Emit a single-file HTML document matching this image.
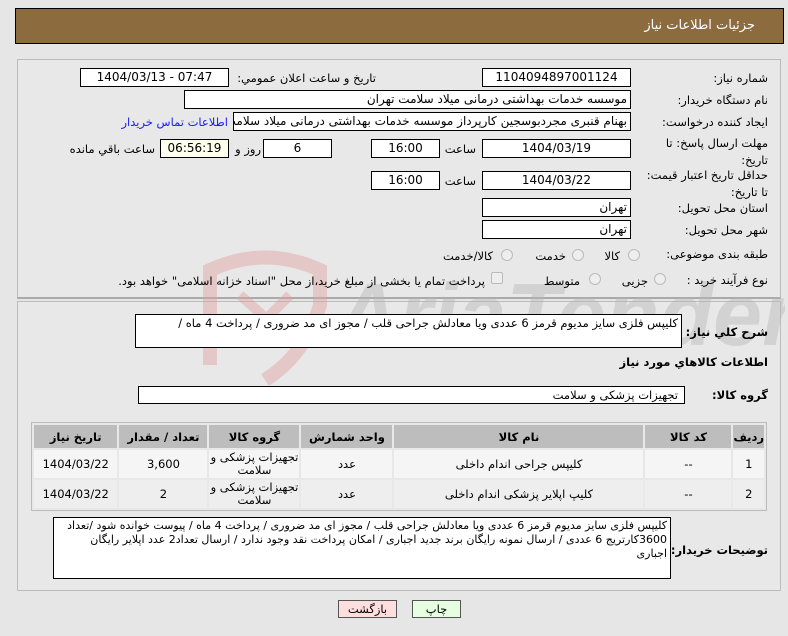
<!DOCTYPE html>
<html><head><meta charset="utf-8"><style>
*{margin:0;padding:0;box-sizing:border-box}
body{width:788px;height:636px;background:#e6e6e6;font-family:"DejaVu Sans","Liberation Sans",sans-serif;font-size:11.5px;color:#000;position:relative;overflow:hidden}
.a{position:absolute}
.box{position:absolute;background:#fff;border:1px solid #000;height:19px;line-height:17px;text-align:center;font-size:12px;white-space:nowrap;overflow:hidden}
.l{position:absolute;white-space:nowrap;direction:rtl;text-align:right;font-size:11.5px}
.rad{position:absolute;width:12px;height:12px;border-radius:50%;border:1px solid #bbb;background:#eee}
table{border-collapse:separate;border-spacing:2px}
td{text-align:center;font-size:11.5px}
</style></head><body>
<div class="a" style="left:15px;top:8px;width:769px;height:36px;background:#8c6b3f;border:1px solid #000"></div>
<div class="l" style="right:33px;top:18px;color:#fff;font-size:13px">جزئیات اطلاعات نیاز</div>

<div class="a" style="left:17px;top:59px;width:764px;height:240px;border:1px solid #bbb;border-bottom:2px solid #aaa;background:#e8e8e8"></div>
<div class="a" style="left:17px;top:301px;width:764px;height:290px;border:1px solid #bbb;background:#e8e8e8"></div>

<!-- watermark -->
<svg class="a" style="left:195px;top:245px;opacity:0.45" width="590" height="140">
<path d="M15 120 V25 Q70 0 125 25 V60 Q110 110 70 135" fill="none" stroke="#e0a0a0" stroke-width="14"/>
<path d="M45 50 L95 95 M95 50 L60 85" stroke="#e0a0a0" stroke-width="10"/>
<text x="140" y="100" font-family="Liberation Sans" font-style="italic" font-weight="bold" font-size="88" fill="#b8b8b8">AriaTender.net</text>
</svg>

<div class="l" style="right:20px;top:71px">شماره نیاز:</div>
<div class="box" style="left:482px;top:68px;width:149px">1104094897001124</div>
<div class="l" style="right:412px;top:71px">تاریخ و ساعت اعلان عمومي:</div>
<div class="box" style="left:80px;top:68px;width:149px">1404/03/13 - 07:47</div>

<div class="l" style="right:20px;top:93px">نام دستگاه خریدار:</div>
<div class="box" style="left:184px;top:90px;width:447px;text-align:right;padding-right:3px;direction:rtl">موسسه خدمات بهداشتی درمانی میلاد سلامت تهران</div>

<div class="l" style="right:20px;top:115px">ایجاد کننده درخواست:</div>
<div class="box" style="left:233px;top:112px;width:398px;text-align:right;direction:rtl;padding-right:3px">بهنام قنبری مجردبوسجین کارپرداز موسسه خدمات بهداشتی درمانی میلاد سلامت تهران</div>
<div class="l" style="right:560px;top:115px;color:#1a1aff">اطلاعات تماس خریدار</div>

<div class="l" style="right:20px;top:135px;line-height:17px">مهلت ارسال پاسخ: تا<br>تاریخ:</div>
<div class="box" style="left:482px;top:139px;width:149px">1404/03/19</div>
<div class="l" style="right:312px;top:142px">ساعت</div>
<div class="box" style="left:371px;top:139px;width:69px">16:00</div>
<div class="l" style="right:527px;top:142px">روز و</div>
<div class="box" style="left:263px;top:139px;width:69px">6</div>
<div class="box" style="left:160px;top:139px;width:69px;background:#ffffee">06:56:19</div>
<div class="l" style="right:633px;top:142px">ساعت باقي مانده</div>

<div class="l" style="right:20px;top:167px;line-height:17px">حداقل تاریخ اعتبار قیمت:<br>تا تاریخ:</div>
<div class="box" style="left:482px;top:171px;width:149px">1404/03/22</div>
<div class="l" style="right:312px;top:174px">ساعت</div>
<div class="box" style="left:371px;top:171px;width:69px">16:00</div>

<div class="l" style="right:20px;top:201px">استان محل تحویل:</div>
<div class="box" style="left:482px;top:198px;width:149px;text-align:right;padding-right:3px">تهران</div>
<div class="l" style="right:20px;top:223px">شهر محل تحویل:</div>
<div class="box" style="left:482px;top:220px;width:149px;text-align:right;padding-right:3px">تهران</div>

<div class="l" style="right:20px;top:247px">طبقه بندی موضوعی:</div>
<div class="rad" style="left:628px;top:249px"></div>
<div class="l" style="right:168px;top:249px">کالا</div>
<div class="rad" style="left:572px;top:249px"></div>
<div class="l" style="right:222px;top:249px">خدمت</div>
<div class="rad" style="left:501px;top:249px"></div>
<div class="l" style="right:295px;top:249px">کالا/خدمت</div>

<div class="l" style="right:20px;top:273px">نوع فرآیند خرید :</div>
<div class="rad" style="left:654px;top:273px"></div>
<div class="l" style="right:140px;top:274px">جزیی</div>
<div class="rad" style="left:589px;top:273px"></div>
<div class="l" style="right:208px;top:274px">متوسط</div>
<div class="a" style="left:491px;top:272px;width:12px;height:12px;border:1px solid #bbb;background:#eee;border-radius:2px"></div>
<div class="l" style="right:303px;top:274px">پرداخت تمام یا بخشی از مبلغ خرید،از محل "اسناد خزانه اسلامی" خواهد بود.</div>

<div class="l" style="right:20px;top:325px;font-weight:bold">شرح کلي نیاز:</div>
<div class="a" style="left:135px;top:314px;width:547px;height:34px;background:#fff;border:1px solid #000;direction:rtl;padding:1px 3px;white-space:nowrap;overflow:hidden">کلیپس فلزی سایز مدیوم قرمز 6 عددی ویا معادلش جراحی قلب / مجوز ای مد ضروری / پرداخت 4 ماه /</div>

<div class="l" style="right:20px;top:355px;font-weight:bold">اطلاعات کالاهاي مورد نياز</div>
<div class="l" style="right:20px;top:388px;font-weight:bold">گروه کالا:</div>
<div class="a" style="left:138px;top:386px;width:547px;height:18px;background:#fff;border:1px solid #000;direction:rtl;padding-right:6px;line-height:16px">تجهیزات پزشکی و سلامت</div>

<div class="a" style="left:31px;top:422px;width:736px;height:89px;border:1px solid #bbb;background:#e8e8e8"></div>
<table class="a" style="left:32px;top:423px;width:734px;direction:rtl">
<tr style="background:#bdbdbd;height:23px;font-weight:bold"><td style="width:27px">ردیف</td><td style="width:86px">کد کالا</td><td style="width:249px">نام کالا</td><td style="width:91px">واحد شمارش</td><td style="width:90px">گروه کالا</td><td style="width:88px">تعداد / مقدار</td><td>تاریخ نیاز</td></tr>
<tr style="background:#f5f5f5;height:28px;line-height:13px"><td>1</td><td>--</td><td>کلیپس جراحی اندام داخلی</td><td>عدد</td><td>تجهیزات پزشکی و سلامت</td><td>3,600</td><td>1404/03/22</td></tr>
<tr style="background:#eeeeee;height:28px;line-height:13px"><td>2</td><td>--</td><td>کلیپ اپلایر پزشکی اندام داخلی</td><td>عدد</td><td>تجهیزات پزشکی و سلامت</td><td>2</td><td>1404/03/22</td></tr>
</table>

<div class="l" style="right:20px;top:543px;font-weight:bold">توضیحات خریدار:</div>
<div class="a" style="left:53px;top:517px;width:618px;height:62px;background:#fff;border:1px solid #000;direction:rtl;padding:1px 3px;line-height:14px;font-size:11px">کلیپس فلزی سایز مدیوم قرمز 6 عددی ویا معادلش جراحی قلب / مجوز ای مد ضروری / پرداخت 4 ماه / پیوست خوانده شود /تعداد 3600کارتریج 6 عددی / ارسال نمونه رایگان  برند جدید اجباری / امکان پرداخت نقد وجود ندارد / ارسال تعداد2 عدد اپلایر رایگان اجباری</div>

<div class="a" style="left:338px;top:600px;width:59px;height:18px;background:#ffdede;border:1px solid #555;text-align:center;line-height:16px">بازگشت</div>
<div class="a" style="left:412px;top:600px;width:49px;height:18px;background:#e6ffe0;border:1px solid #555;text-align:center;line-height:16px">چاپ</div>
</body></html>
